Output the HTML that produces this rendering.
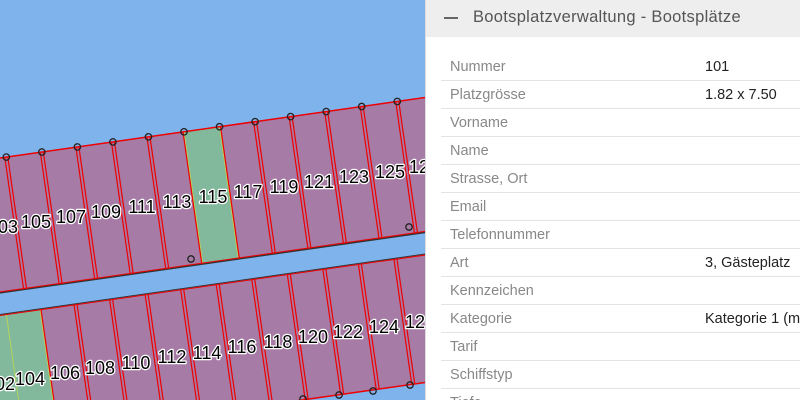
<!DOCTYPE html>
<html><head><meta charset="utf-8"><style>
html,body{margin:0;padding:0;width:800px;height:400px;overflow:hidden;background:#7fb3ec;}
#map{position:absolute;left:0;top:0;width:425px;height:400px;}
#panel{position:absolute;left:425px;top:0;width:375px;height:400px;background:#fff;border-left:1px solid #ddd;box-sizing:border-box;font-family:"Liberation Sans",sans-serif;overflow:hidden;}
#hdr{height:37px;background:#eeeeee;position:relative;}
#hdr .dash{position:absolute;left:18px;top:17px;width:14px;height:2px;background:#666;}
#hdr .t{position:absolute;left:47px;top:8px;font-size:16.5px;color:#555;letter-spacing:0.3px;}
.row{position:absolute;left:15px;right:0;height:28px;border-bottom:1px solid #e3e3e3;box-sizing:border-box;font-size:14.5px;line-height:28px;}
.row .l{position:absolute;left:9px;color:#888;}
.row .v{position:absolute;left:264px;color:#222;white-space:nowrap;}
</style></head><body>
<svg id="map" width="425" height="400" viewBox="0 0 425 400">
<rect width="425" height="400" fill="#7fb3ec"/>
<g transform="rotate(-8.1)">
 <rect x="-100" y="156.4" width="700" height="133.6" fill="#a67ca6"/>
 <rect x="163.6" y="156.4" width="35.9" height="133.6" fill="#82b89b" stroke="#b5d35a" stroke-width="1"/>
 <line x1="-100" y1="156.4" x2="600" y2="156.4" stroke="#e00" stroke-width="1.5"/>
 <line x1="-100" y1="290" x2="600" y2="290" stroke="#333" stroke-width="1.5"/>
 <line x1="-100" y1="289" x2="600" y2="289" stroke="#e00" stroke-width="1"/>
 <g stroke="#e00" stroke-width="1.2">
 <line x1="-17.4" y1="156.4" x2="-17.4" y2="290"/><line x1="-14.4" y1="156.4" x2="-14.4" y2="290"/>
 <line x1="18.5" y1="156.4" x2="18.5" y2="290"/><line x1="21.5" y1="156.4" x2="21.5" y2="290"/>
 <line x1="54.4" y1="156.4" x2="54.4" y2="290"/><line x1="57.4" y1="156.4" x2="57.4" y2="290"/>
 <line x1="90.3" y1="156.4" x2="90.3" y2="290"/><line x1="93.3" y1="156.4" x2="93.3" y2="290"/>
 <line x1="126.2" y1="156.4" x2="126.2" y2="290"/><line x1="129.2" y1="156.4" x2="129.2" y2="290"/>
 <line x1="162.6" y1="156.4" x2="162.6" y2="290"/>
 <line x1="200.5" y1="156.4" x2="200.5" y2="290"/>
 <line x1="233.9" y1="156.4" x2="233.9" y2="290"/><line x1="236.9" y1="156.4" x2="236.9" y2="290"/>
 <line x1="269.8" y1="156.4" x2="269.8" y2="290"/><line x1="272.8" y1="156.4" x2="272.8" y2="290"/>
 <line x1="305.7" y1="156.4" x2="305.7" y2="290"/><line x1="308.7" y1="156.4" x2="308.7" y2="290"/>
 <line x1="341.6" y1="156.4" x2="341.6" y2="290"/><line x1="344.6" y1="156.4" x2="344.6" y2="290"/>
 <line x1="377.5" y1="156.4" x2="377.5" y2="290"/><line x1="380.5" y1="156.4" x2="380.5" y2="290"/>
 <line x1="413.4" y1="156.4" x2="413.4" y2="290"/><line x1="416.4" y1="156.4" x2="416.4" y2="290"/>
 <line x1="449.3" y1="156.4" x2="449.3" y2="290"/><line x1="452.3" y1="156.4" x2="452.3" y2="290"/>
 </g>
 <g fill="none" stroke="#222" stroke-width="1.3">
 <circle cx="-15.9" cy="156.4" r="3.2"/><circle cx="20" cy="156.4" r="3.2"/><circle cx="55.9" cy="156.4" r="3.2"/>
 <circle cx="91.8" cy="156.4" r="3.2"/><circle cx="127.7" cy="156.4" r="3.2"/><circle cx="163.6" cy="156.4" r="3.2"/>
 <circle cx="199.5" cy="156.4" r="3.2"/><circle cx="235.4" cy="156.4" r="3.2"/><circle cx="271.3" cy="156.4" r="3.2"/>
 <circle cx="307.2" cy="156.4" r="3.2"/><circle cx="343.1" cy="156.4" r="3.2"/><circle cx="379" cy="156.4" r="3.2"/>
 </g>

 <rect x="-100" y="311.9" width="700" height="126.7" fill="#a67ca6"/>
 <rect x="-100" y="311.9" width="96" height="126.7" fill="#82b89b"/>
 <line x1="-38" y1="311.9" x2="-38" y2="438.6" stroke="#b5d35a" stroke-width="1"/>
 <line x1="-4" y1="311.9" x2="-4" y2="438.6" stroke="#b5d35a" stroke-width="1"/>
 <line x1="-100" y1="311.4" x2="600" y2="311.4" stroke="#333" stroke-width="1"/>
 <line x1="-100" y1="312.4" x2="600" y2="312.4" stroke="#e00" stroke-width="1"/>
 <line x1="-100" y1="438.6" x2="600" y2="438.6" stroke="#e00" stroke-width="1.5"/>
 <g stroke="#e00" stroke-width="1.2">
 <line x1="-3" y1="311.9" x2="-3" y2="438.6"/>
 <line x1="30.4" y1="311.9" x2="30.4" y2="438.6"/><line x1="33.4" y1="311.9" x2="33.4" y2="438.6"/>
 <line x1="66.3" y1="311.9" x2="66.3" y2="438.6"/><line x1="69.3" y1="311.9" x2="69.3" y2="438.6"/>
 <line x1="102.2" y1="311.9" x2="102.2" y2="438.6"/><line x1="105.2" y1="311.9" x2="105.2" y2="438.6"/>
 <line x1="138.1" y1="311.9" x2="138.1" y2="438.6"/><line x1="141.1" y1="311.9" x2="141.1" y2="438.6"/>
 <line x1="174" y1="311.9" x2="174" y2="438.6"/><line x1="177" y1="311.9" x2="177" y2="438.6"/>
 <line x1="209.9" y1="311.9" x2="209.9" y2="438.6"/><line x1="212.9" y1="311.9" x2="212.9" y2="438.6"/>
 <line x1="245.8" y1="311.9" x2="245.8" y2="438.6"/><line x1="248.8" y1="311.9" x2="248.8" y2="438.6"/>
 <line x1="281.7" y1="311.9" x2="281.7" y2="438.6"/><line x1="284.7" y1="311.9" x2="284.7" y2="438.6"/>
 <line x1="317.6" y1="311.9" x2="317.6" y2="438.6"/><line x1="320.6" y1="311.9" x2="320.6" y2="438.6"/>
 <line x1="353.5" y1="311.9" x2="353.5" y2="438.6"/><line x1="356.5" y1="311.9" x2="356.5" y2="438.6"/>
 <line x1="389.4" y1="311.9" x2="389.4" y2="438.6"/><line x1="392.4" y1="311.9" x2="392.4" y2="438.6"/>
 <line x1="425.3" y1="311.9" x2="425.3" y2="438.6"/><line x1="428.3" y1="311.9" x2="428.3" y2="438.6"/>
 <line x1="461.2" y1="311.9" x2="461.2" y2="438.6"/><line x1="464.2" y1="311.9" x2="464.2" y2="438.6"/>
 </g>
</g>
<g fill="none" stroke="#222" stroke-width="1.3">
 <circle cx="191" cy="259" r="3.2"/><circle cx="409" cy="227" r="3.2"/>
 <circle cx="303" cy="399" r="3.2"/><circle cx="339" cy="395" r="3.2"/><circle cx="373" cy="391" r="3.2"/><circle cx="410" cy="385" r="3.2"/>
</g>
<g font-family="Liberation Sans, sans-serif" font-size="18" fill="#000" stroke="#fff" stroke-width="2.5" paint-order="stroke" stroke-linejoin="round" text-anchor="middle">
 <text x="3" y="233">103</text><text x="36" y="228">105</text><text x="71" y="223">107</text><text x="106" y="218">109</text>
 <text x="142" y="213">111</text><text x="177" y="208">113</text><text x="213" y="203">115</text><text x="248" y="198">117</text>
 <text x="284" y="193">119</text><text x="319" y="188">121</text><text x="354" y="183">123</text><text x="390" y="178">125</text>
 <text x="424" y="173">127</text>
 <text x="0" y="390">102</text><text x="30" y="385">104</text><text x="65" y="379">106</text><text x="100" y="374">108</text>
 <text x="136" y="369">110</text><text x="172" y="363">112</text><text x="207" y="359">114</text><text x="242" y="353">116</text>
 <text x="278" y="348">118</text><text x="313" y="343">120</text><text x="348" y="338">122</text><text x="384" y="333">124</text>
 <text x="420" y="328">126</text>
</g>
</svg>
<div id="panel">
 <div id="hdr"><div class="dash"></div><div class="t">Bootsplatzverwaltung - Bootsplätze</div></div>
 <div class="row" style="top:53px"><span class="l">Nummer</span><span class="v">101</span></div>
 <div class="row" style="top:81px"><span class="l">Platzgrösse</span><span class="v">1.82 x 7.50</span></div>
 <div class="row" style="top:109px"><span class="l">Vorname</span></div>
 <div class="row" style="top:137px"><span class="l">Name</span></div>
 <div class="row" style="top:165px"><span class="l">Strasse, Ort</span></div>
 <div class="row" style="top:193px"><span class="l">Email</span></div>
 <div class="row" style="top:221px"><span class="l">Telefonnummer</span></div>
 <div class="row" style="top:249px"><span class="l">Art</span><span class="v">3, Gästeplatz</span></div>
 <div class="row" style="top:277px"><span class="l">Kennzeichen</span></div>
 <div class="row" style="top:305px"><span class="l">Kategorie</span><span class="v">Kategorie 1 (mit Strom)</span></div>
 <div class="row" style="top:333px"><span class="l">Tarif</span></div>
 <div class="row" style="top:361px"><span class="l">Schiffstyp</span></div>
 <div class="row" style="top:389px;height:11px;border-bottom:none;overflow:hidden"><span class="l">Tiefe</span></div>
</div>
</body></html>
